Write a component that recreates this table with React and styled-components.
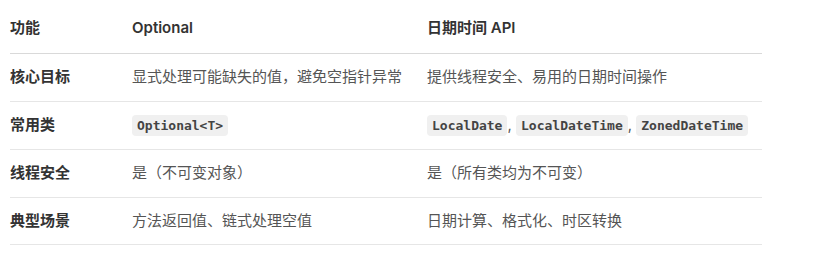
import React from "react";
import styled, { createGlobalStyle } from "styled-components";

const GlobalStyle = createGlobalStyle`
  body {
    margin: 0;
    background: #ffffff;
    font-family: Inter, "Noto Sans CJK SC", sans-serif;
  }
`;

const Page = styled.div`
  padding: 0 10px;
`;

const Table = styled.div`
  width: 752px;
  display: flex;
  flex-direction: column;
`;

const Row = styled.div`
  display: grid;
  grid-template-columns: 122px 295px 1fr;
  padding: ${(p) => (p.$head ? "16px 0 14px" : "12px 0")};
  line-height: ${(p) => (p.$head ? "23px" : "22.5px")};
  border-bottom: 1px solid ${(p) => (p.$head ? "#d9d9d9" : "#e6e6e6")};
`;

const Cell = styled.div`
  font-size: 15px;
  font-weight: ${(p) => (p.$bold ? 600 : 400)};
  color: ${(p) => (p.$bold ? "#333333" : "#555555")};
  white-space: nowrap;
`;

const Code = styled.code`
  font-family: "DejaVu Sans Mono", monospace;
  font-size: 13px;
  font-weight: 700;
  color: #444444;
  background: #f0f0f0;
  border-radius: 4px;
  padding: 3px 5px;
`;

const rows = [
  {
    label: "核心目标",
    optional: "显式处理可能缺失的值，避免空指针异常",
    datetime: "提供线程安全、易用的日期时间操作",
  },
  {
    label: "常用类",
    optional: <Code>Optional&lt;T&gt;</Code>,
    datetime: (
      <>
        <Code>LocalDate</Code>, <Code>LocalDateTime</Code>,{" "}
        <Code>ZonedDateTime</Code>
      </>
    ),
  },
  {
    label: "线程安全",
    optional: "是（不可变对象）",
    datetime: "是（所有类均为不可变）",
  },
  {
    label: "典型场景",
    optional: "方法返回值、链式处理空值",
    datetime: "日期计算、格式化、时区转换",
  },
];

export default function App() {
  return (
    <Page>
      <GlobalStyle />
      <Table>
        <Row $head>
          <Cell $bold>功能</Cell>
          <Cell $bold>Optional</Cell>
          <Cell $bold>日期时间 API</Cell>
        </Row>
        {rows.map((r) => (
          <Row key={r.label}>
            <Cell $bold>{r.label}</Cell>
            <Cell>{r.optional}</Cell>
            <Cell>{r.datetime}</Cell>
          </Row>
        ))}
      </Table>
    </Page>
  );
}
